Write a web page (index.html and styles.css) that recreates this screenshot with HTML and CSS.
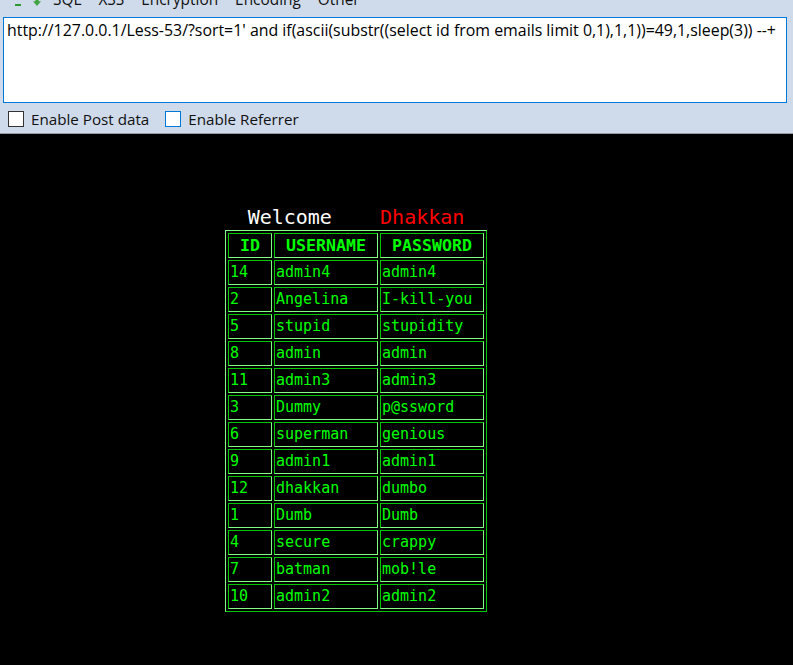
FILE: index.html
```html
<!DOCTYPE html>
<html>
<head>
<meta charset="utf-8">
<link rel="stylesheet" href="styles.css">
</head>
<body>
<div class="panel">
  <div class="toolbar">
    <span class="ico ico-minus"></span>
    <span class="ico ico-arrow"></span>
    <span class="menu m-sql">SQL</span>
    <span class="menu">XSS</span>
    <span class="menu">Encryption</span>
    <span class="menu">Encoding</span>
    <span class="menu">Other</span>
  </div>
  <div class="urlbox">http://127.0.0.1/Less-53/?sort=1' and if(ascii(substr((select id from emails limit 0,1),1,1))=49,1,sleep(3)) --+</div>
  <div class="opts">
    <label class="opt"><span class="cb"></span>Enable Post data</label>
    <label class="opt"><span class="cb cb-focus"></span>Enable Referrer</label>
  </div>
</div>
<div class="page">
  <div class="wrap">
    <div class="welcome">Welcome&nbsp;&nbsp;&nbsp;&nbsp;<span class="name">Dhakkan</span></div>
    <table class="users">
      <tr><th class="c-id">ID</th><th class="c-u">USERNAME</th><th class="c-p">PASSWORD</th></tr>
      <tr><td>14</td><td>admin4</td><td>admin4</td></tr>
      <tr><td>2</td><td>Angelina</td><td>I-kill-you</td></tr>
      <tr><td>5</td><td>stupid</td><td>stupidity</td></tr>
      <tr><td>8</td><td>admin</td><td>admin</td></tr>
      <tr><td>11</td><td>admin3</td><td>admin3</td></tr>
      <tr><td>3</td><td>Dummy</td><td>p@ssword</td></tr>
      <tr><td>6</td><td>superman</td><td>genious</td></tr>
      <tr><td>9</td><td>admin1</td><td>admin1</td></tr>
      <tr><td>12</td><td>dhakkan</td><td>dumbo</td></tr>
      <tr><td>1</td><td>Dumb</td><td>Dumb</td></tr>
      <tr><td>4</td><td>secure</td><td>crappy</td></tr>
      <tr><td>7</td><td>batman</td><td>mob!le</td></tr>
      <tr><td>10</td><td>admin2</td><td>admin2</td></tr>
    </table>
  </div>
</div>
</body>
</html>
```
FILE: styles.css
```css
html, body {
  margin: 0;
  padding: 0;
  background: #000;
}
.panel {
  background: #cfdbeb;
  height: 133px;
  border-bottom: 1px solid #9a9a9a;
  overflow: hidden;
  font-family: "Open Sans", "Noto Sans", sans-serif;
  font-size: 15.4px;
  color: #111;
}
.toolbar {
  display: flex;
  align-items: center;
  height: 34px;
  margin-top: -17px;
  line-height: 20px;
  padding-left: 15px;
  box-sizing: border-box;
}
.ico {
  display: inline-block;
}
.ico-minus {
  width: 6px;
  height: 2px;
  background: #2e9a2e;
  margin-top: 10px;
}
.ico-arrow {
  width: 8px;
  height: 8px;
  margin-left: 12px;
  margin-top: 4px;
  background: #3fa33f;
  clip-path: polygon(0 40%, 30% 40%, 30% 0, 70% 0, 70% 40%, 100% 40%, 50% 100%);
}
.menu {
  margin-left: 17px;
  white-space: nowrap;
}
.m-sql {
  margin-left: 12px;
}
.urlbox {
  box-sizing: border-box;
  height: 86px;
  margin: 0 6px 0 3px;
  background: #fff;
  border: 1px solid #0078d7;
  padding: 2px 3px;
  font-size: 15.9px;
  line-height: 20px;
  white-space: nowrap;
  overflow: hidden;
  color: #000;
}
.opts {
  display: flex;
  align-items: center;
  padding-left: 8px;
  margin-top: 8px;
  gap: 16px;
  font-size: 15.2px;
}
.opt {
  display: flex;
  align-items: center;
  gap: 7px;
  line-height: 16px;
}
.cb {
  display: inline-block;
  box-sizing: border-box;
  width: 16px;
  height: 16px;
  background: #fff;
  border: 1px solid #333;
}
.cb-focus {
  border-color: #0078d7;
}
.page {
  padding-top: 71px;
}
.wrap {
  margin-left: 225px;
  width: 262px;
}
.welcome {
  font-family: "DejaVu Sans Mono", "Liberation Mono", monospace;
  font-size: 20px;
  line-height: 25px;
  color: #fff;
  text-align: center;
}
.name {
  color: #ff0000;
}
.users {
  border-collapse: separate;
  border-spacing: 2px;
  border: 1px solid;
  border-color: #80ff80 #00c800 #00c800 #80ff80;
  font-family: "DejaVu Sans Mono", "Liberation Mono", monospace;
  font-size: 15px;
  color: #00ff00;
}
.users th, .users td {
  border: 1px solid;
  border-color: #00c800 #80ff80 #80ff80 #00c800;
  padding: 1px;
  height: 21px;
  line-height: 21px;
  box-sizing: content-box;
  white-space: nowrap;
}
.users th {
  font-size: 16.6px;
  font-weight: bold;
  text-align: center;
}
.users td {
  text-align: left;
}
.c-id { width: 40px; }
.c-u { width: 100px; }
.c-p { width: 100px; }
```
